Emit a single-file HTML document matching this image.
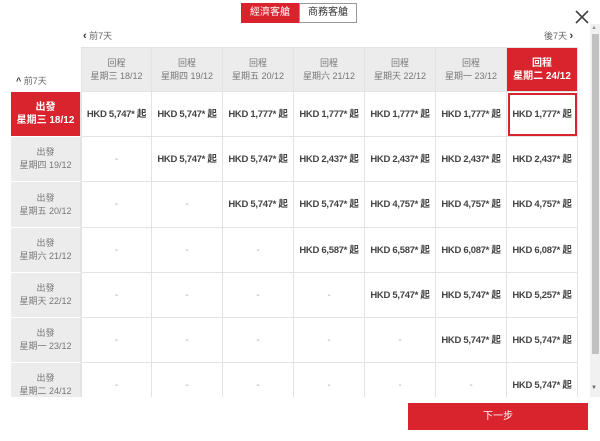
<!DOCTYPE html>
<html><head><meta charset="utf-8"><style>
*{margin:0;padding:0;box-sizing:border-box}
body{width:600px;height:441px;background:#fff;font-family:"Liberation Sans","Noto Sans CJK TC",sans-serif;position:relative;overflow:hidden;color:#333}
.a{position:absolute}
.tab{top:3px;height:20px;font-size:10px;text-align:center;line-height:20px}
.c{position:absolute;display:flex;align-items:center;justify-content:center;text-align:center;font-size:10px;border-right:1px solid #e3e3e3;border-bottom:1px solid #e3e3e3;line-height:13px}
.h{background:#ececec;color:#777;font-size:9px}
.r{background:#ececec;color:#777;font-size:9px}
.p{font-weight:bold;color:#444;font-size:9.5px;white-space:nowrap;letter-spacing:-0.3px}
.d{color:#aaa}
.red{background:#d9232d;color:#fff;font-weight:bold}
</style></head><body>
<div class="a tab" style="left:241px;width:58px;background:#d9232d;color:#fff">經濟客艙</div>
<div class="a tab" style="left:299px;width:58px;border:1px solid #999;color:#333;line-height:18px">商務客艙</div>
<svg class="a" style="left:575px;top:10px" width="14" height="14"><path d="M1 1L13 13M13 1L1 13" stroke="#444" stroke-width="1.6"/></svg>
<div class="a" style="left:83px;top:29px;font-size:9px;color:#666"><b style="font-size:11px;color:#333">‹</b> 前7天</div>
<div class="a" style="left:544px;top:29px;font-size:9px;color:#666">後7天 <b style="font-size:11px;color:#333">›</b></div>
<div class="a" style="left:16px;top:74px;font-size:9px;color:#666"><b style="color:#333">^</b> 前7天</div>
<div class="a" style="left:590px;top:24px;width:10px;height:373px;background:#f1f1f1"></div>
<div class="a" style="left:592px;top:34px;width:7px;height:320px;background:#c1c1c1"></div>
<div class="a" style="left:591px;top:385px;font-size:6px;color:#666">▼</div>
<div class="a" style="left:591px;top:25px;font-size:6px;color:#999">▲</div>
<div class="a" style="left:0;top:0;width:590px;height:397px;overflow:hidden" id="t"></div>
<div class="a" style="left:408px;top:403px;width:180px;height:27px;background:#d9232d;color:#fff;font-size:10px;text-align:center;line-height:27px">下一步</div>
<script>
var t=document.getElementById('t'),X=[81,152,223,294,365,436,507,578],Y=[47,92,137,182,228,273,318,363,408];
var days=['星期三 18/12','星期四 19/12','星期五 20/12','星期六 21/12','星期天 22/12','星期一 23/12','星期二 24/12'];
var P=[['5,747','5,747','1,777','1,777','1,777','1,777','1,777'],
[0,'5,747','5,747','2,437','2,437','2,437','2,437'],
[0,0,'5,747','5,747','4,757','4,757','4,757'],
[0,0,0,'6,587','6,587','6,087','6,087'],
[0,0,0,0,'5,747','5,747','5,257'],
[0,0,0,0,0,'5,747','5,747'],
[0,0,0,0,0,0,'5,747']];
var h='';
for(var j=0;j<7;j++){var red=j==6;h+='<div class="c '+(red?'red':'h')+'" style="left:'+X[j]+'px;top:47px;width:'+(X[j+1]-X[j])+'px;height:45px;border-top:1px solid #e3e3e3;'+(j==0?'border-left:1px solid #e3e3e3;':'')+'">回程<br>'+days[j]+'</div>';}
for(var i=0;i<7;i++){var red=i==0;var hh=Y[i+2]-Y[i+1];
h+='<div class="c '+(red?'red':'r')+'" style="left:11px;top:'+Y[i+1]+'px;width:70px;height:'+hh+'px;border-bottom:1px solid #fff">出發<br>'+days[i]+'</div>';
for(var j=0;j<7;j++){var v=P[i][j];var sel=(i==0&&j==6);
h+='<div class="c '+(v?'p':'d')+'" style="left:'+X[j]+'px;top:'+Y[i+1]+'px;width:'+(X[j+1]-X[j])+'px;height:'+hh+'px;'+(j==0?'border-left:1px solid #e3e3e3;':'')+(sel?'outline:2px solid #d9232d;outline-offset:-3px;':'')+'">'+(v?'HKD '+v+'* 起':'-')+'</div>';}}
t.innerHTML=h;
</script>
</body></html>
